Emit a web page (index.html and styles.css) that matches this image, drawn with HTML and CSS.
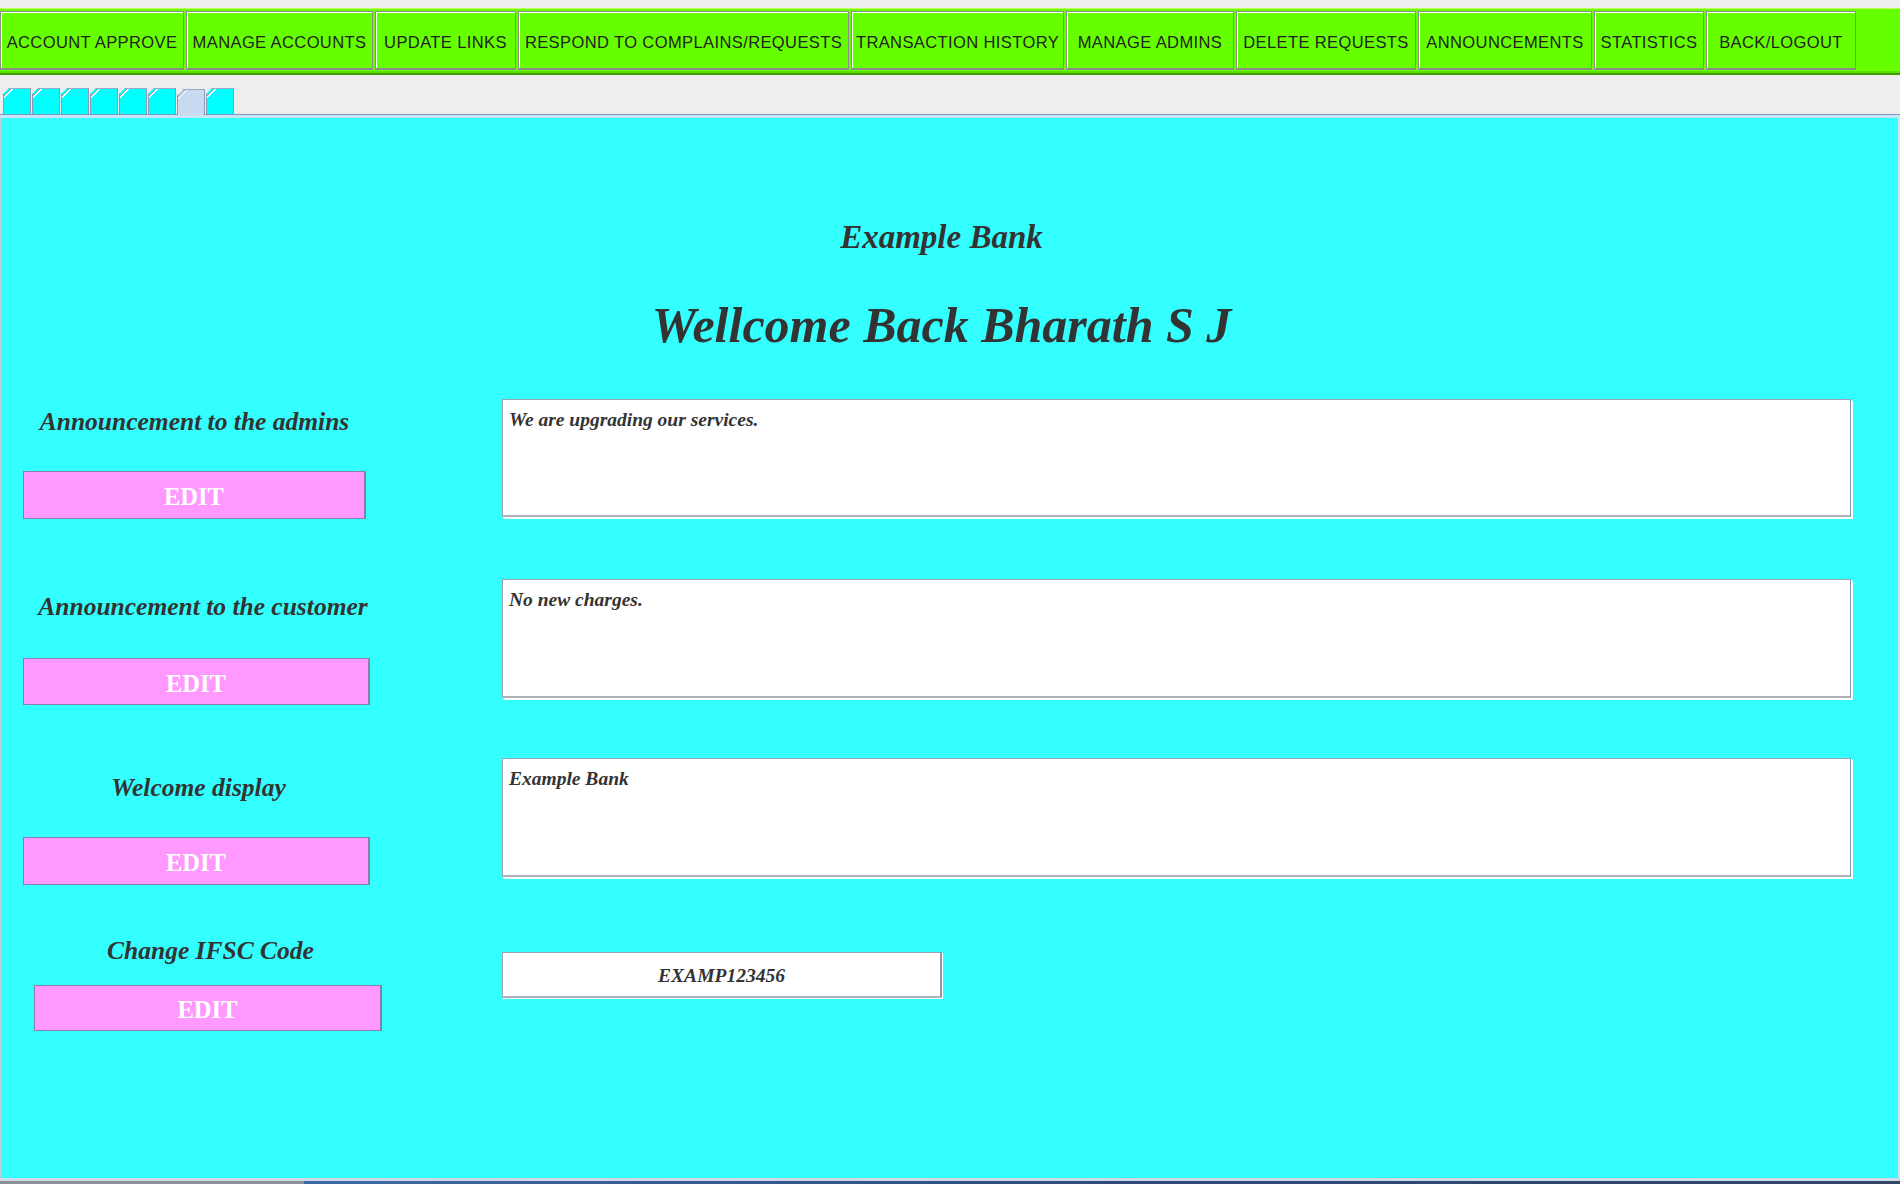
FILE: index.html
```html
<!DOCTYPE html>
<html lang="en">
<head>
<meta charset="utf-8">
<title>Admin - Announcements</title>
<link rel="stylesheet" href="styles.css">
</head>
<body>
<div class="app">
  <div class="topgap"></div>
  <nav class="menubar">
    <button class="mbtn mb1">ACCOUNT APPROVE</button>
    <button class="mbtn mb2">MANAGE ACCOUNTS</button>
    <button class="mbtn mb3">UPDATE LINKS</button>
    <button class="mbtn mb4">RESPOND TO COMPLAINS/REQUESTS</button>
    <button class="mbtn mb5">TRANSACTION HISTORY</button>
    <button class="mbtn mb6">MANAGE ADMINS</button>
    <button class="mbtn mb7">DELETE REQUESTS</button>
    <button class="mbtn mb8">ANNOUNCEMENTS</button>
    <button class="mbtn mb9">STATISTICS</button>
    <button class="mbtn mb10">BACK/LOGOUT</button>
  </nav>
  <div class="tabstrip">
    <div class="tab"></div>
    <div class="tab"></div>
    <div class="tab"></div>
    <div class="tab"></div>
    <div class="tab"></div>
    <div class="tab"></div>
    <div class="tab tab-sel"></div>
    <div class="tab"></div>
  </div>
  <div class="tabedge"></div>
  <main class="panel">
    <div class="heads">
      <h2 class="bank">Example Bank</h2>
      <h1 class="welcome">Wellcome Back Bharath S J</h1>
    </div>

    <section class="row row1">
      <div class="side">
        <div class="label">Announcement to the admins</div>
        <button class="edit">EDIT</button>
      </div>
      <div class="box">We are upgrading our services.</div>
    </section>

    <section class="row row2">
      <div class="side">
        <div class="label">Announcement to the customer</div>
        <button class="edit">EDIT</button>
      </div>
      <div class="box">No new charges.</div>
    </section>

    <section class="row row3">
      <div class="side">
        <div class="label">Welcome display</div>
        <button class="edit">EDIT</button>
      </div>
      <div class="box">Example Bank</div>
    </section>

    <section class="row row4">
      <div class="side">
        <div class="label">Change IFSC Code</div>
        <button class="edit">EDIT</button>
      </div>
      <div class="field">EXAMP123456</div>
    </section>
  </main>
  <div class="statusline"></div>
  <div class="taskbar"></div>
</div>
</body>
</html>
```

FILE: styles.css
```css
* { box-sizing: border-box; }

html, body {
  margin: 0;
  padding: 0;
  width: 1900px;
  height: 1184px;
  overflow: hidden;
  background: #eeeeee;
}

.app {
  display: flex;
  flex-direction: column;
  width: 1900px;
  height: 1184px;
}

.topgap {
  height: 8px;
  flex: none;
  background: #eeeeee;
}

/* ---------- menu bar ---------- */
.menubar {
  flex: none;
  height: 67px;
  display: flex;
  align-items: flex-start;
  gap: 2px;
  padding-top: 2px;
  background: #66ff00;
  border-top: 1px solid #c6ff5a;
  border-bottom: 2px solid #3f9c00;
  box-shadow: inset 0 -2px 0 #5ce000;
}

.mbtn {
  flex: none;
  height: 59px;
  padding: 5px 0 0;
  margin: 0;
  background: #66ff00;
  border: 1px solid #8c8c8c;
  border-bottom-width: 2px;
  box-shadow: inset 1px 1px 0 #ffffff, 1px 0 0 #f4fff0 inset;
  font-family: "Liberation Sans", Arial, sans-serif;
  font-size: 16.5px;
  letter-spacing: 0.4px;
  color: #222222;
  display: flex;
  align-items: center;
  justify-content: center;
  white-space: nowrap;
  cursor: pointer;
}

.mb1 { width: 184px; }
.mb2 { width: 187px; }
.mb3 { width: 141px; }
.mb4 { width: 331px; }
.mb5 { width: 213px; }
.mb6 { width: 168px; }
.mb7 { width: 180px; }
.mb8 { width: 174px; }
.mb9 { width: 110px; }
.mb10 { width: 150px; }

/* ---------- tab strip ---------- */
.tabstrip {
  flex: none;
  height: 39px;
  display: flex;
  align-items: flex-end;
  gap: 1px;
  padding-left: 3px;
  background: #eeeeee;
}

.tab {
  width: 28px;
  height: 26px;
  background:
    linear-gradient(135deg, transparent 4.5px, #8a9bb8 4.5px, #8a9bb8 5.6px, #ffffff 5.6px, #ffffff 6.6px, transparent 6.6px),
    #00ffff;
  border: 1px solid #8a9bb8;
  border-bottom: none;
  border-top-color: #9aaac4;
  clip-path: polygon(6px 0, 100% 0, 100% 100%, 0 100%, 0 6px);
}

.tab-sel {
  height: 26px;
  margin-bottom: -1px;
  position: relative;
  z-index: 1;
  background:
    linear-gradient(135deg, transparent 4.5px, #8a9bb8 4.5px, #8a9bb8 5.6px, #eef4fc 5.6px, #eef4fc 6.6px, transparent 6.6px),
    #c9daf0;
}

.tabedge {
  flex: none;
  height: 4px;
  border-top: 1px solid #7f96c4;
  background: #c9e4f4;
}

/* ---------- main panel ---------- */
.panel {
  flex: 1;
  background: #33ffff;
  border-left: 1px solid #c4ccd6;
  border-right: 2px solid #d8e0e8;
  padding-top: 99px;
  font-family: "Liberation Serif", "Times New Roman", serif;
  color: #333333;
}

.heads {
  padding-right: 16px;
  text-align: center;
}

.bank {
  margin: 0;
  height: 40px;
  line-height: 40px;
  font-size: 33px;
  font-weight: bold;
  font-style: italic;
}

.welcome {
  margin: 38px 0 0;
  height: 60px;
  line-height: 60px;
  font-size: 50px;
  font-weight: bold;
  font-style: italic;
}

.row {
  display: flex;
  align-items: flex-start;
}

.row1 { margin-top: 44px; height: 180px; }
.row2 { height: 179px; }
.row3 { height: 178px; }
.row4 { height: 110px; }

.side {
  flex: none;
  width: 501px;
  padding-left: 22px;
  display: flex;
  flex-direction: column;
  align-items: flex-start;
}

.label {
  height: 30px;
  line-height: 30px;
  font-size: 25.5px;
  font-weight: bold;
  font-style: italic;
  text-align: center;
  white-space: nowrap;
}

.edit {
  margin: 0;
  padding: 4px 0 0;
  background: #ff99ff;
  border: 1px solid #8a80a4;
  border-right: 2px solid #8a80a4;
  color: #ffffff;
  font-family: "Liberation Serif", "Times New Roman", serif;
  font-size: 24.5px;
  font-weight: bold;
  cursor: pointer;
}

.row1 .label { margin-top: 8px; width: 343px; }
.row1 .edit { margin-top: 34px; width: 343px; height: 48px; }

.row2 .label { margin-top: 13px; width: 347px; padding-left: 13px; }
.row2 .edit { margin-top: 36px; width: 347px; height: 47px; }

.row3 .label { margin-top: 15px; width: 347px; padding-left: 4px; }
.row3 .edit { margin-top: 34px; width: 347px; height: 48px; }

.row4 .side { padding-left: 33px; }
.row4 .label { margin-top: 0; width: 348px; padding-left: 5px; }
.row4 .edit { margin-top: 19px; width: 348px; height: 46px; }

.box {
  flex: none;
  width: 1349px;
  height: 119px;
  background: #ffffff;
  border: 1px solid #98a4b4;
  border-right-color: #8494a8;
  border-bottom: 2px solid #aab2be;
  box-shadow: 1px 1px 0 #ffffff, 2px 2px 0 #ffffff;
  padding: 9px 6px;
  font-size: 19.5px;
  line-height: 22px;
  font-weight: bold;
  font-style: italic;
  color: #333333;
}

.row1 .box { height: 118px; }

.field {
  flex: none;
  margin-top: 16px;
  width: 440px;
  height: 46px;
  background: #ffffff;
  border: 1px solid #98a4b4;
  border-bottom: 2px solid #aab2be;
  border-right: 2px solid #8a98aa;
  box-shadow: 1px 1px 0 #ffffff;
  display: flex;
  align-items: center;
  justify-content: center;
  padding-top: 2px;
  font-size: 19.5px;
  font-weight: bold;
  font-style: italic;
  color: #333333;
}

.statusline {
  flex: none;
  height: 3px;
  background: #d0dae6;
}

.taskbar {
  flex: none;
  height: 3px;
  background: linear-gradient(90deg, #8a8f98 0, #8a8f98 16%, #3f6aa6 16%, #2d4a7a 60%, #334466 100%);
}
```
